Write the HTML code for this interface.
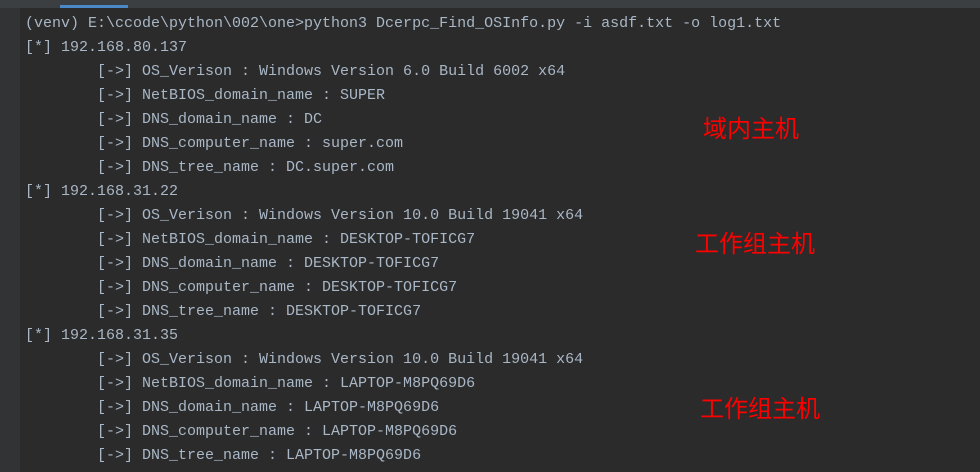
<!DOCTYPE html>
<html style="margin:0;width:980px;height:472px;overflow:hidden;"><head><meta charset="utf-8"><style>
body{margin:0;width:980px;height:472px;background:#2b2b2b;overflow:hidden;position:relative;font-family:"Liberation Mono",monospace;}
.top{position:absolute;left:0;top:0;width:980px;height:8px;background:#3c3f41;}
.tab{position:absolute;left:60px;top:5px;width:68px;height:3px;background:#4a88c7;}
.gut{position:absolute;left:0;top:8px;width:20px;height:464px;background:#313335;}
pre{position:absolute;left:25px;top:12px;margin:0;font-size:15px;line-height:24px;color:#a9b7c6;font-family:"Liberation Mono",monospace;}
.r{position:absolute;color:#ff0000;font-size:24px;line-height:24px;font-family:"Liberation Sans","Noto Sans CJK SC",sans-serif;}
</style></head><body>
<div class="top"></div><div class="tab"></div><div class="gut"></div>
<pre>(venv) E:\ccode\python\002\one>python3 Dcerpc_Find_OSInfo.py -i asdf.txt -o log1.txt
[*] 192.168.80.137
        [->] OS_Verison : Windows Version 6.0 Build 6002 x64
        [->] NetBIOS_domain_name : SUPER
        [->] DNS_domain_name : DC
        [->] DNS_computer_name : super.com
        [->] DNS_tree_name : DC.super.com
[*] 192.168.31.22
        [->] OS_Verison : Windows Version 10.0 Build 19041 x64
        [->] NetBIOS_domain_name : DESKTOP-TOFICG7
        [->] DNS_domain_name : DESKTOP-TOFICG7
        [->] DNS_computer_name : DESKTOP-TOFICG7
        [->] DNS_tree_name : DESKTOP-TOFICG7
[*] 192.168.31.35
        [->] OS_Verison : Windows Version 10.0 Build 19041 x64
        [->] NetBIOS_domain_name : LAPTOP-M8PQ69D6
        [->] DNS_domain_name : LAPTOP-M8PQ69D6
        [->] DNS_computer_name : LAPTOP-M8PQ69D6
        [->] DNS_tree_name : LAPTOP-M8PQ69D6
[*]</pre>
<div class="r" style="left:703px;top:118px;">域内主机</div>
<div class="r" style="left:695px;top:233px;">工作组主机</div>
<div class="r" style="left:700px;top:398px;">工作组主机</div>
</body></html>
